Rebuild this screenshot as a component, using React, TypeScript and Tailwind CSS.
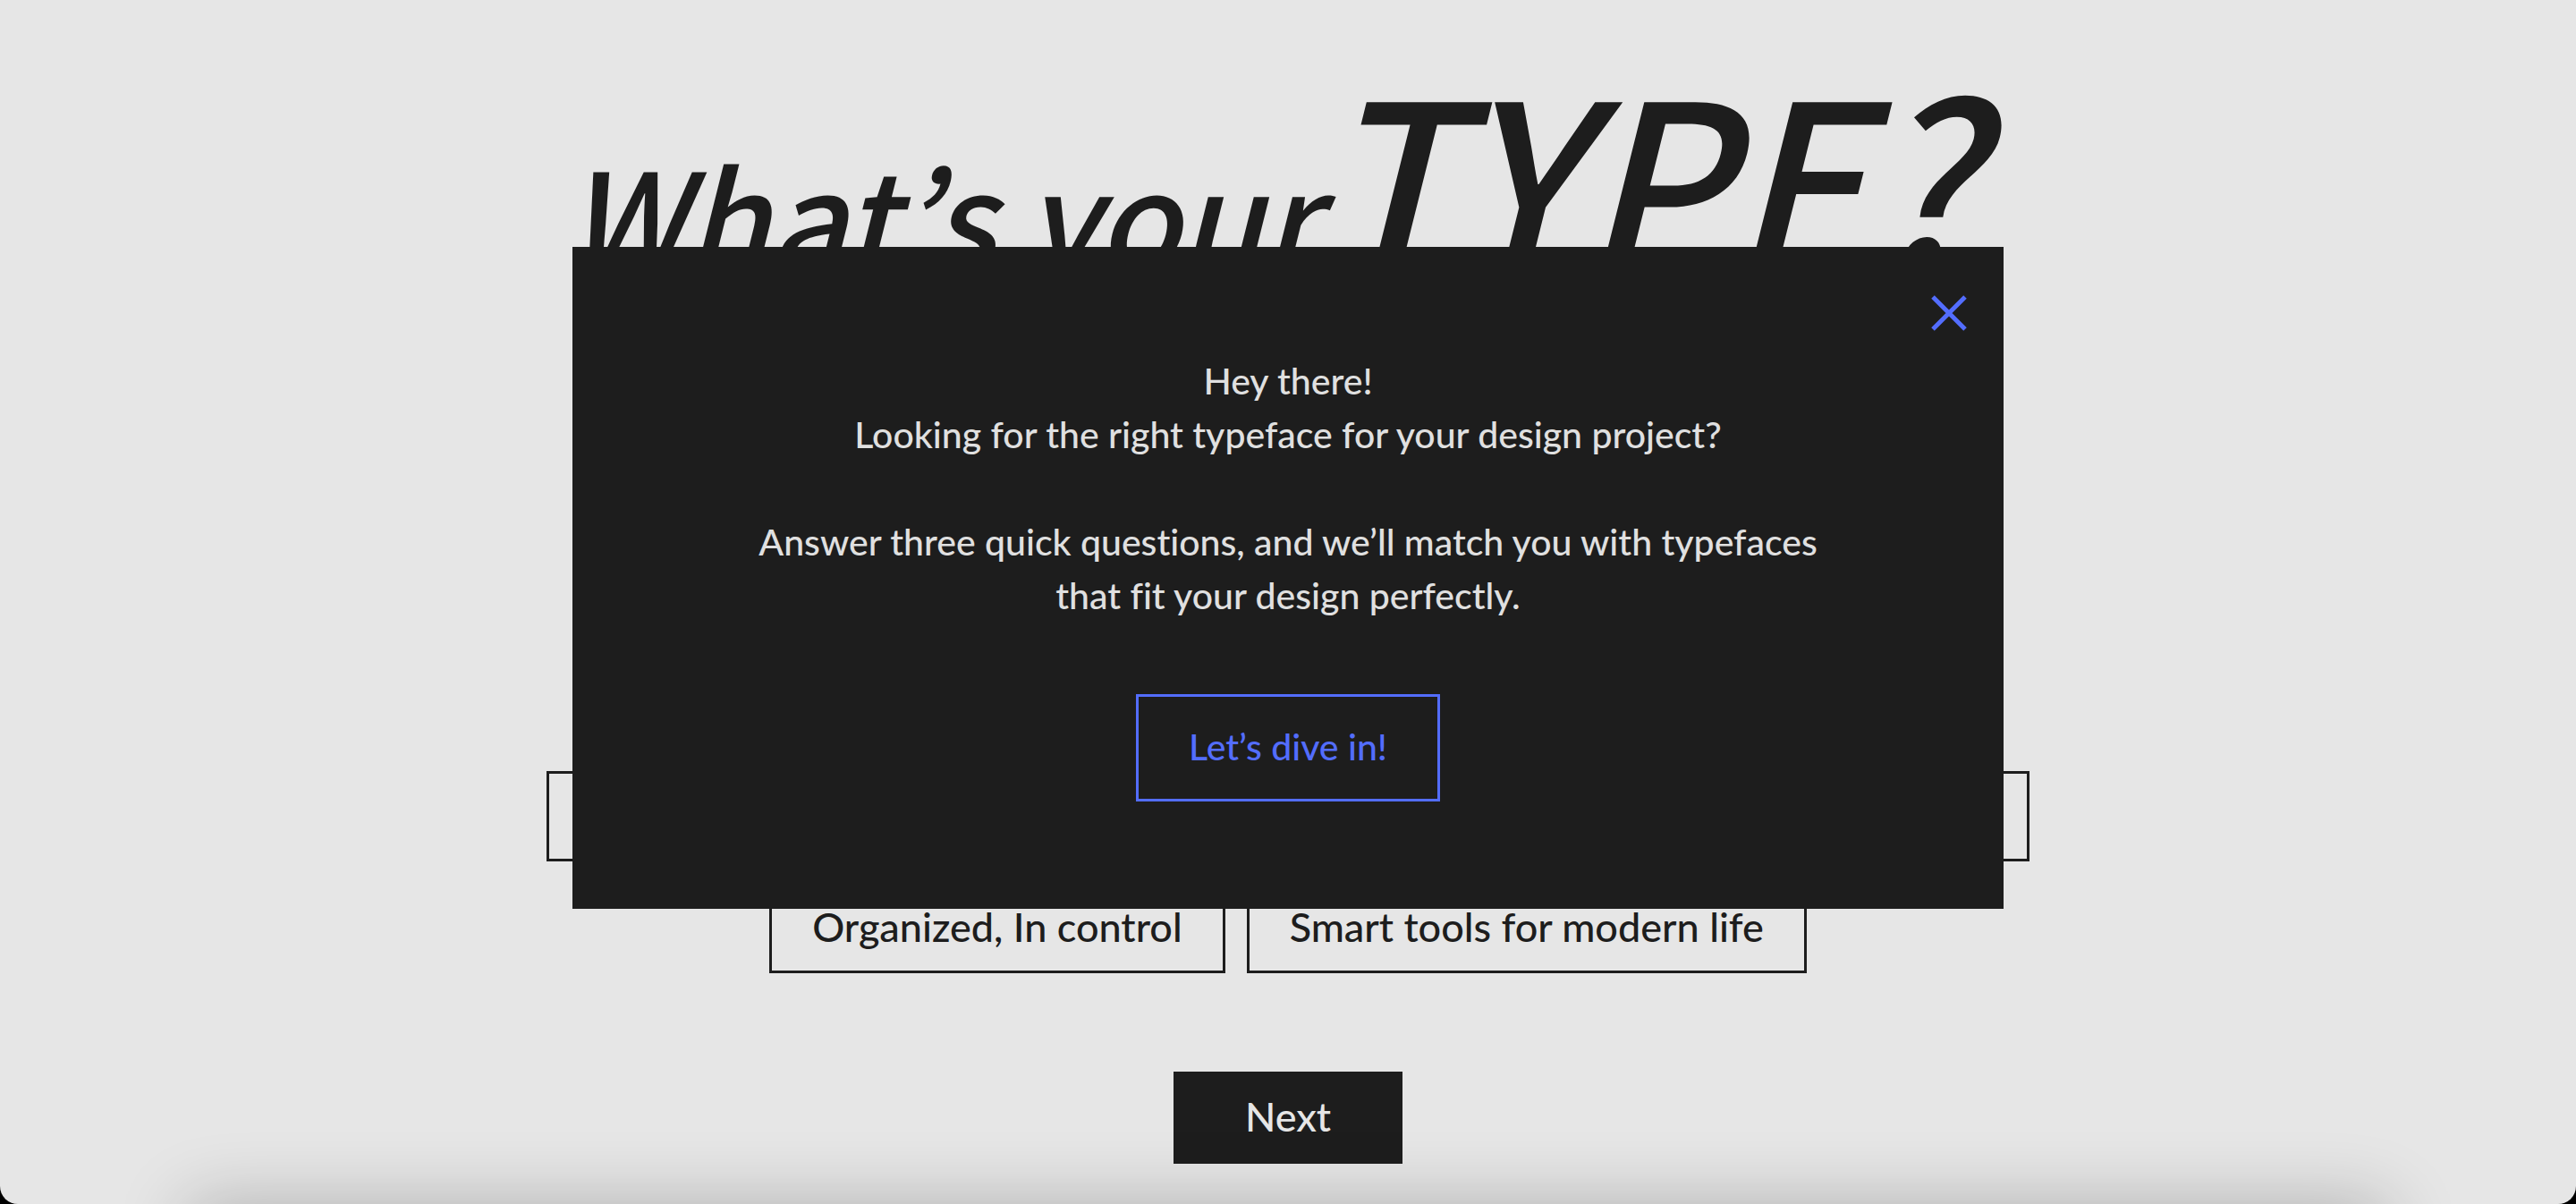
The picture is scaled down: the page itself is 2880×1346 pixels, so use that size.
import { useState } from "react";

const hiddenOptions = ["First option", "Second option", "Third option"];
const options = ["Organized, In control", "Smart tools for modern life"];

function Title() {
  return (
    <h1 className="flex items-baseline justify-center pr-9 font-['Noto_Sans_CJK_JP',sans-serif] leading-none font-medium whitespace-nowrap italic">
      <span className="text-[150px]">What’s your</span>
      <span className="text-[256px]">TYPE?</span>
    </h1>
  );
}

function IntroDialog({ onClose }: { onClose: () => void }) {
  return (
    <div className="fixed inset-x-0 top-0 flex justify-center pt-[276px]">
      <section
        role="dialog"
        aria-label="Introduction"
        className="relative flex w-full max-w-[1600px] flex-col items-center gap-20 bg-[#1d1d1d] px-48 py-[120px]"
      >
        <button
          type="button"
          aria-label="Close"
          onClick={onClose}
          className="absolute top-[54px] right-[41px] text-[#536dfe]"
        >
          <svg viewBox="0 0 40 40" className="size-10" fill="none" stroke="currentColor" strokeWidth="5">
            <path d="M2 2 38 38M38 2 2 38" />
          </svg>
        </button>
        <div className="text-center text-[41px] leading-[60px] text-[#e0e0e0]">
          <p>Hey there!</p>
          <p>Looking for the right typeface for your design project?</p>
          <p className="mt-[60px]">
            Answer three quick questions, and we’ll match you with typefaces
            <br />
            that fit your design perfectly.
          </p>
        </div>
        <button
          type="button"
          onClick={onClose}
          className="h-[120px] border-[3px] border-[#536dfe] px-14 pb-[3px] text-[41px] leading-[60px] text-[#536dfe]"
        >
          Let’s dive in!
        </button>
      </section>
    </div>
  );
}

export default function App() {
  const [open, setOpen] = useState(true);

  return (
    <div className="min-h-screen bg-black font-[Lato,sans-serif] font-medium [font-variant-ligatures:no-common-ligatures]">
      <main className="relative flex min-h-screen flex-col items-center overflow-hidden rounded-b-[20px] bg-[#e6e6e6] pb-11 text-[#1d1d1d]">
        <div className="flex h-[862px] flex-col pt-16">
          <Title />
        </div>
        <div className="flex w-full max-w-[1658px] gap-6">
          {hiddenOptions.map((label) => (
            <button key={label} type="button" aria-label={label} className="h-[101px] flex-1 border-[3px] border-[#1d1d1d]" />
          ))}
        </div>
        <div className="mt-6 flex gap-6">
          {options.map((label) => (
            <button key={label} type="button" className="h-[101px] border-[3px] border-[#1d1d1d] px-[45px] pb-[3px] text-[45px] leading-[60px]">
              {label}
            </button>
          ))}
        </div>
        <button type="button" className="mt-[110px] h-[103px] bg-[#1d1d1d] px-20 pb-[3px] text-[45px] leading-[60px] text-[#e6e6e6]">
          Next
        </button>
        <div className="pointer-events-none absolute inset-x-[210px] top-full h-20 shadow-[0_0_80px_rgba(0,0,0,0.24)]" />
      </main>
      {open && <IntroDialog onClose={() => setOpen(false)} />}
    </div>
  );
}
